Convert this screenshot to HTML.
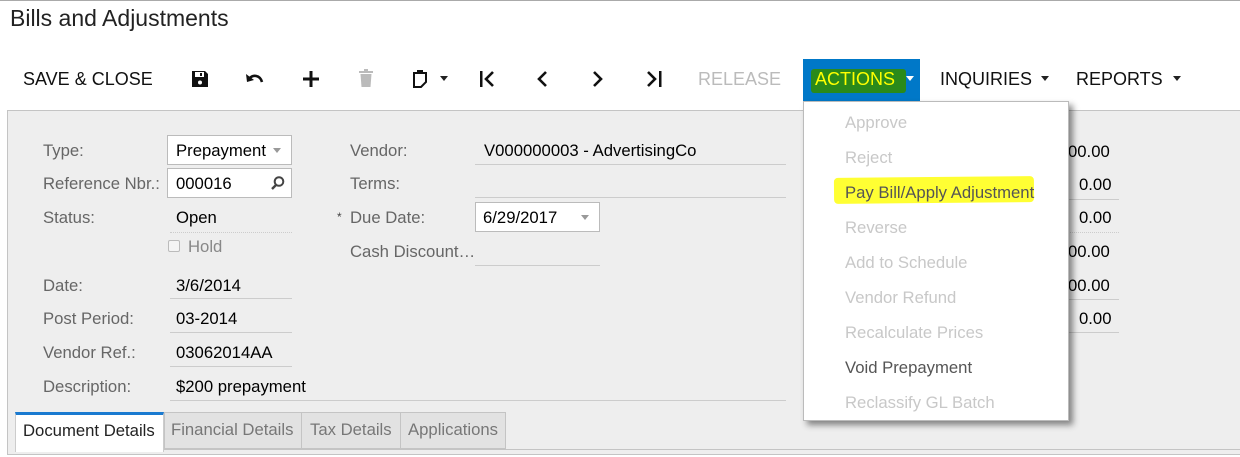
<!DOCTYPE html>
<html><head><meta charset="utf-8"><style>
*{margin:0;padding:0;box-sizing:border-box}
body{width:1240px;height:457px;background:#fff;font-family:"Liberation Sans",Arial,sans-serif;position:relative;overflow:hidden;color:#000}
.a{position:absolute;white-space:nowrap}
.tb{font-size:18px;top:69px;color:#111}
.lab{font-size:16.7px;color:#666}
.val{font-size:16.7px;color:#000}
.ln{position:absolute;height:1px;background:#ccc}
.box{position:absolute;background:#fff;border:1px solid #bbb}
.mi{position:absolute;left:41px;font-size:16.7px;color:#c8c8c8}
.tri{display:inline-block;width:0;height:0;border-left:4px solid transparent;border-right:4px solid transparent;border-top:5px solid #222;vertical-align:top}
</style></head><body>
<div class="a" style="left:0;top:0;width:1240px;height:1px;background:#aaa"></div>
<div class="a" style="left:10px;top:5px;font-size:23px;color:#222">Bills and Adjustments</div>

<div class="a tb" style="left:23px">SAVE &amp; CLOSE</div>
<svg class="a" style="left:191px;top:70px" width="18" height="18" viewBox="0 0 18 18"><path d="M1 1h13l3 3v13H1z" fill="#111"/><rect x="4" y="2" width="9" height="5" fill="#fff"/><rect x="9" y="3" width="2" height="3" fill="#111"/><circle cx="9" cy="12.5" r="2" fill="#fff"/></svg>
<svg class="a" style="left:245px;top:72px" width="20" height="14" viewBox="0 0 20 14"><path d="M4 7 C8 2 15 3 17 10" stroke="#111" stroke-width="2.6" fill="none"/><path d="M1 2 L2 10 L9 8z" fill="#111"/></svg>
<svg class="a" style="left:302px;top:70px" width="18" height="18"><rect x="7.5" y="1" width="3" height="16" fill="#111"/><rect x="1" y="7.5" width="16" height="3" fill="#111"/></svg>
<svg class="a" style="left:358px;top:68px" width="16" height="20"><rect x="1" y="3" width="14" height="2" fill="#bbb"/><rect x="6" y="1" width="4" height="2" fill="#bbb"/><path d="M2.5 6h11l-1 13h-9z" fill="#bbb"/></svg>
<svg class="a" style="left:412px;top:69px" width="16" height="20"><path d="M2 4h12v9l-5 5H2z" stroke="#111" stroke-width="2" fill="none"/><rect x="5" y="1" width="6" height="4" fill="#111"/></svg>
<div class="a" style="left:440px;top:76px"><span class="tri"></span></div>
<svg class="a" style="left:478px;top:70px" width="20" height="18"><rect x="2" y="1" width="2.5" height="16" fill="#111"/><path d="M15 2 L8 9 L15 16" stroke="#111" stroke-width="2.6" fill="none"/></svg>
<svg class="a" style="left:534px;top:70px" width="16" height="18"><path d="M12 2 L5 9 L12 16" stroke="#111" stroke-width="2.6" fill="none"/></svg>
<svg class="a" style="left:590px;top:70px" width="16" height="18"><path d="M4 2 L11 9 L4 16" stroke="#111" stroke-width="2.6" fill="none"/></svg>
<svg class="a" style="left:645px;top:70px" width="20" height="18"><path d="M3 2 L10 9 L3 16" stroke="#111" stroke-width="2.6" fill="none"/><rect x="14" y="1" width="2.5" height="16" fill="#111"/></svg>
<div class="a tb" style="left:698px;color:#bbb">RELEASE</div>
<div class="a" style="left:803px;top:59px;width:117px;height:42px;background:#0078c8"></div>
<div class="a" style="left:811px;top:69px;width:95px;height:24px;background:#2a8a1a;border-radius:3px"></div>
<div class="a tb" style="left:815px;color:#ffff00">ACTIONS</div>
<div class="a" style="left:906px;top:76px"><span class="tri" style="border-top-color:#fff"></span></div>
<div class="a tb" style="left:940px">INQUIRIES</div>
<div class="a" style="left:1041px;top:76px"><span class="tri"></span></div>
<div class="a tb" style="left:1076px">REPORTS</div>
<div class="a" style="left:1173px;top:76px"><span class="tri"></span></div>

<!-- panel -->
<div class="a" style="left:7px;top:110px;width:1240px;height:345px;background:#eee;border:1px solid #c4c4c4;border-right:none"></div>

<div class="a lab" style="left:43px;top:141px">Type:</div>
<div class="box" style="left:167px;top:135px;width:125px;height:30px"></div>
<div class="a val" style="left:176px;top:141px">Prepayment</div>
<div class="a" style="left:273px;top:148px"><span class="tri" style="border-top-color:#999"></span></div>
<div class="a lab" style="left:43px;top:174px">Reference Nbr.:</div>
<div class="box" style="left:167px;top:168px;width:125px;height:30px"></div>
<div class="a val" style="left:176px;top:174px">000016</div>
<svg class="a" style="left:270px;top:175px" width="16" height="16"><circle cx="9" cy="6.5" r="4.3" stroke="#444" stroke-width="2" fill="none"/><path d="M6 10 L2 14" stroke="#444" stroke-width="2.4"/></svg>
<div class="a lab" style="left:43px;top:208px">Status:</div>
<div class="a val" style="left:176px;top:208px">Open</div>
<div class="ln" style="left:170px;top:232px;width:122px;background:none;border-top:1px dotted #ccc"></div>
<div class="a" style="left:168px;top:240px;width:12px;height:12px;border:1px solid #bbb;border-radius:2px;background:#f4f4f4"></div>
<div class="a lab" style="left:188px;top:237px;color:#888">Hold</div>
<div class="a lab" style="left:43px;top:276px">Date:</div>
<div class="a val" style="left:176px;top:276px">3/6/2014</div>
<div class="ln" style="left:170px;top:298px;width:122px"></div>
<div class="a lab" style="left:43px;top:309px">Post Period:</div>
<div class="a val" style="left:176px;top:309px">03-2014</div>
<div class="ln" style="left:170px;top:332px;width:122px"></div>
<div class="a lab" style="left:43px;top:343px">Vendor Ref.:</div>
<div class="a val" style="left:176px;top:343px">03062014AA</div>
<div class="ln" style="left:170px;top:366px;width:122px"></div>
<div class="a lab" style="left:43px;top:377px">Description:</div>
<div class="a val" style="left:176px;top:377px">$200 prepayment</div>
<div class="ln" style="left:170px;top:400px;width:616px"></div>

<div class="a lab" style="left:350px;top:141px">Vendor:</div>
<div class="a val" style="left:484px;top:141px">V000000003 - AdvertisingCo</div>
<div class="ln" style="left:475px;top:164px;width:311px"></div>
<div class="a lab" style="left:350px;top:174px">Terms:</div>
<div class="ln" style="left:475px;top:197px;width:311px"></div>
<div class="a" style="left:337px;top:210px;font-size:12px;color:#444">*</div>
<div class="a lab" style="left:350px;top:208px">Due Date:</div>
<div class="box" style="left:475px;top:202px;width:125px;height:30px"></div>
<div class="a val" style="left:483px;top:208px">6/29/2017</div>
<div class="a" style="left:581px;top:215px"><span class="tri" style="border-top-color:#999"></span></div>
<div class="a lab" style="left:350px;top:242px">Cash Discount…</div>
<div class="ln" style="left:475px;top:265px;width:125px"></div>

<div class="a val" style="left:1068px;top:142px">00.00</div>
<div class="a val" style="left:1079px;top:175px">0.00</div>
<div class="ln" style="left:1040px;top:199px;width:79px"></div>
<div class="a val" style="left:1079px;top:208px">0.00</div>
<div class="ln" style="left:1040px;top:232px;width:79px;background:none;border-top:1px dotted #ccc"></div>
<div class="a val" style="left:1068px;top:242px">00.00</div>
<div class="a val" style="left:1068px;top:276px">00.00</div>
<div class="ln" style="left:1040px;top:299px;width:79px"></div>
<div class="a val" style="left:1079px;top:309px">0.00</div>
<div class="ln" style="left:1040px;top:332px;width:79px"></div>

<!-- tabs -->
<div class="a" style="left:15px;top:412px;width:149px;height:40px;background:#fff;border-top:3px solid #1a7ad0;border-left:1px solid #ccc;border-right:1px solid #ccc"></div>
<div class="a" style="left:23px;top:421px;font-size:16.7px;color:#222">Document Details</div>
<div class="a" style="left:164px;top:412px;width:342px;height:37px;background:#e2e2e2;border:1px solid #c4c4c4"></div>
<div class="a" style="left:301px;top:412px;width:1px;height:37px;background:#c4c4c4"></div>
<div class="a" style="left:400px;top:412px;width:1px;height:37px;background:#c4c4c4"></div>
<div class="a" style="left:171px;top:420px;font-size:16.7px;color:#777">Financial Details</div>
<div class="a" style="left:310px;top:420px;font-size:16.7px;color:#777">Tax Details</div>
<div class="a" style="left:408px;top:420px;font-size:16.7px;color:#777">Applications</div>
<div class="a" style="left:164px;top:449px;width:1080px;height:1px;background:#c4c4c4"></div>

<!-- dropdown -->
<div class="a" style="left:803px;top:101px;width:266px;height:320px;background:#fff;border:1px solid #bbb;box-shadow:4px 4px 6px rgba(0,0,0,.45)">
<div class="mi" style="top:11px">Approve</div>
<div class="mi" style="top:46px">Reject</div>
<div class="a" style="left:30px;top:75px;width:200px;height:26px;background:#ffff33;border-radius:4px;transform:rotate(-0.5deg)"></div>
<div class="mi" style="top:81px;color:#555">Pay Bill/Apply Adjustment</div>
<div class="mi" style="top:116px">Reverse</div>
<div class="mi" style="top:151px">Add to Schedule</div>
<div class="mi" style="top:186px">Vendor Refund</div>
<div class="mi" style="top:221px">Recalculate Prices</div>
<div class="mi" style="top:256px;color:#555">Void Prepayment</div>
<div class="mi" style="top:291px">Reclassify GL Batch</div>
</div>
</body></html>
